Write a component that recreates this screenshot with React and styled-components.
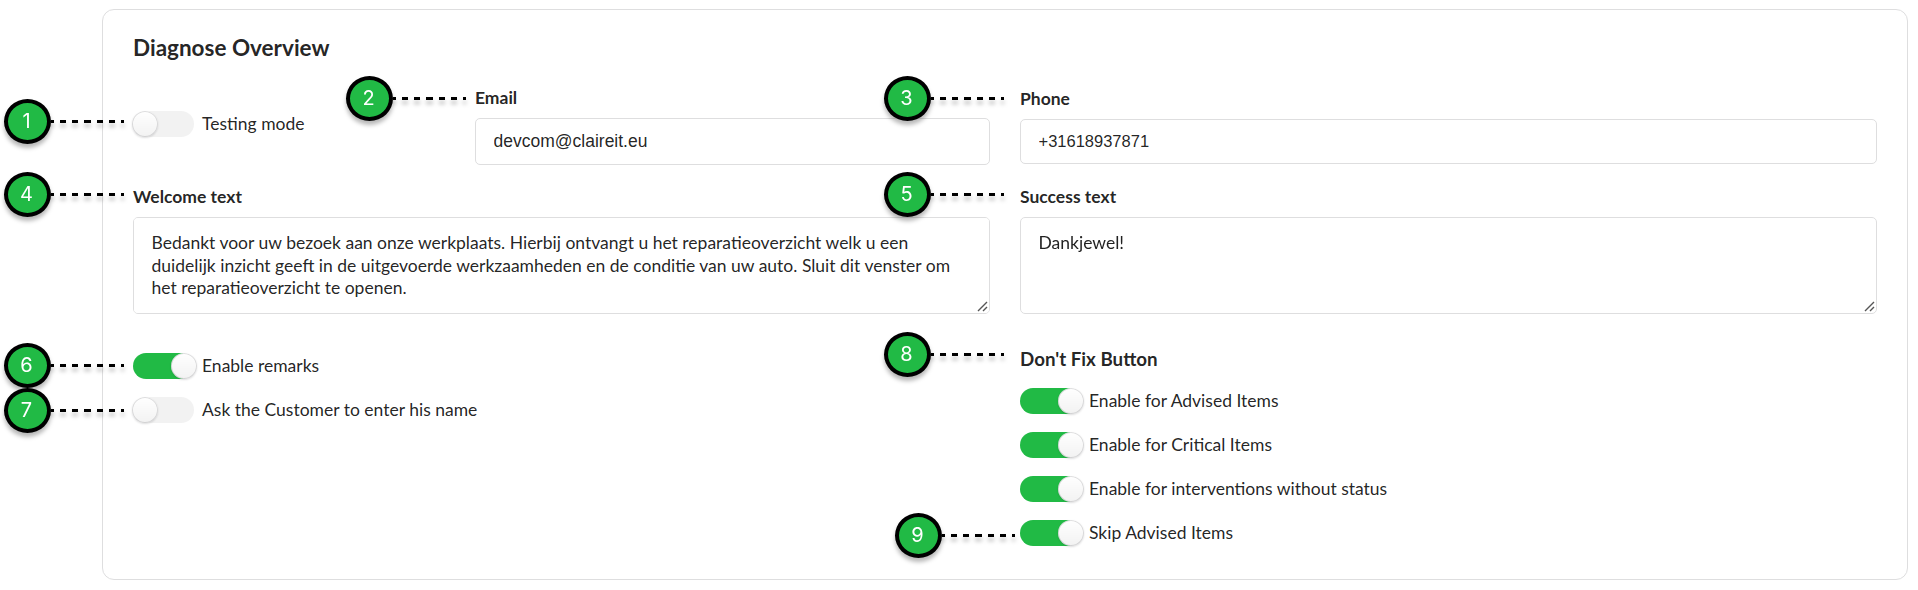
import styled, { createGlobalStyle } from "styled-components";

const GlobalStyle = createGlobalStyle`
  * {
    box-sizing: border-box;
  }

  body {
    margin: 0;
    background-color: #fff;
    color: rgba(0, 0, 0, 0.87);
    font-family: Lato, "Open Sans", sans-serif;
    font-size: 17.5px;
    line-height: 22.5px;
  }
`;

const Page = styled.main`
  position: relative;
  height: 590px;
  padding: 9px 10px 10px 102px;
  overflow: hidden;
`;

const Segment = styled.section`
  height: 571px;
  padding: 23px 30px 0;
  border: 1px solid #dededf;
  border-radius: 12px;
`;

const Title = styled.h3`
  margin: 0;
  font-size: 22.5px;
  line-height: 29px;
  font-weight: 700;
`;

const Columns = styled.div`
  display: grid;
  grid-template-columns: 1fr 1fr;
  column-gap: 30px;
`;

const ModeRow = styled.div`
  display: grid;
  grid-template-columns: 342px 1fr;
`;

const Field = styled.div`
  display: flex;
  flex-direction: column;
  padding-top: ${(props) => props.$top}px;
`;

const Label = styled.label`
  margin-bottom: 9px;
  font-size: 17.5px;
  line-height: 22px;
  font-weight: 700;
`;

const Input = styled.input`
  width: 100%;
  height: ${(props) => props.$height}px;
  padding: 0 17.5px;
  border: 1px solid #dededf;
  border-radius: 5px;
  outline: none;
  background: #fff;
  color: rgba(0, 0, 0, 0.87);
  font-family: "Liberation Sans", Arial, sans-serif;
  font-size: ${(props) => props.$size}px;
`;

const TextBox = styled.div`
  position: relative;
`;

const TextArea = styled.textarea`
  display: block;
  width: 100%;
  height: 97px;
  padding: 14px 17.5px;
  border: 1px solid #dededf;
  border-radius: 5px;
  outline: none;
  resize: none;
  overflow: auto;
  background: #fff;
  color: rgba(0, 0, 0, 0.87);
  font: inherit;
`;

const Grip = styled.svg`
  position: absolute;
  right: 2px;
  bottom: 2px;
  width: 11px;
  height: 11px;
  stroke: #555;
  stroke-width: 1.4;
`;

const ToggleList = styled.div`
  display: flex;
  flex-direction: column;
  gap: 18px;
  padding-top: ${(props) => props.$top}px;
`;

const ToggleRow = styled.label`
  display: flex;
  align-items: center;
  gap: ${(props) => (props.$on ? 5 : 8)}px;
  height: 26px;
`;

const Track = styled.span`
  display: flex;
  justify-content: ${(props) => (props.$on ? "flex-end" : "flex-start")};
  width: ${(props) => (props.$on ? 64 : 61)}px;
  height: 26px;
  border-radius: 13px;
  background: ${(props) =>
    props.$on
      ? "linear-gradient(to right, #21ba45 50px, transparent 50px)"
      : "#f2f2f2"};
`;

const Knob = styled.span`
  width: 26px;
  height: 26px;
  margin-left: -1px;
  border-radius: 50%;
  background: #fff linear-gradient(transparent, rgba(0, 0, 0, 0.05));
  box-shadow:
    0 1px 2px 0 rgba(34, 36, 38, 0.15),
    0 0 0 1px rgba(34, 36, 38, 0.15) inset;
`;

const GroupTitle = styled.h4`
  margin: 0;
  padding-top: 34px;
  font-size: 18.75px;
  line-height: 22px;
  font-weight: 700;
`;

// Numbered markers float above the form
const Callout = styled.div`
  position: absolute;
  left: ${(props) => props.$x}px;
  top: ${(props) => props.$y}px;
  display: flex;
  align-items: center;
  filter: drop-shadow(0 4px 2px rgba(0, 0, 0, 0.28));
`;

const Badge = styled.span`
  display: flex;
  align-items: center;
  justify-content: center;
  width: 47px;
  height: 45px;
  padding: 0 2px 1px 0;
  border: 4px solid #000;
  border-radius: 50%;
  background: #21ba45;
  color: #fff;
  font-family: Inter, sans-serif;
  font-size: 20px;
  font-weight: 400;
  line-height: 1;
`;

const Leader = styled.span`
  width: 73px;
  height: 3px;
  background: repeating-linear-gradient(
    to right,
    #000 0 3px,
    transparent 3px 9px,
    #000 9px 12.2px
  );
`;

const callouts = [
  { id: 1, x: 4, y: 99 },
  { id: 2, x: 346, y: 76 },
  { id: 3, x: 884, y: 76 },
  { id: 4, x: 4, y: 172 },
  { id: 5, x: 884, y: 172 },
  { id: 6, x: 4, y: 343 },
  { id: 7, x: 4, y: 388 },
  { id: 8, x: 884, y: 332 },
  { id: 9, x: 895, y: 513 },
];

const fixOptions = [
  "Enable for Advised Items",
  "Enable for Critical Items",
  "Enable for interventions without status",
  "Skip Advised Items",
];

const welcomeText =
  "Bedankt voor uw bezoek aan onze werkplaats. Hierbij ontvangt u het reparatieoverzicht welk u een duidelijk inzicht geeft in de uitgevoerde werkzaamheden en de conditie van uw auto. Sluit dit venster om het reparatieoverzicht te openen.";

const Toggle = ({ on, children }) => (
  <ToggleRow $on={on}>
    <Track $on={on}>
      <Knob />
    </Track>
    <span>{children}</span>
  </ToggleRow>
);

const MultilineInput = ({ value }) => (
  <TextBox>
    <TextArea defaultValue={value} />
    <Grip viewBox="0 0 11 11">
      <path d="M1 10 10 1M6 10 10 6" />
    </Grip>
  </TextBox>
);

export default function App() {
  return (
    <>
      <GlobalStyle />
      <Page>
        <Segment>
          <Title>Diagnose Overview</Title>
          <Columns>
            <div>
              <ModeRow>
                <ToggleList $top={49}>
                  <Toggle>Testing mode</Toggle>
                </ToggleList>
                <Field $top={25}>
                  <Label>Email</Label>
                  <Input
                    $height={47}
                    $size={17.5}
                    defaultValue="devcom@claireit.eu"
                  />
                </Field>
              </ModeRow>
              <Field $top={21}>
                <Label>Welcome text</Label>
                <MultilineInput value={welcomeText} />
              </Field>
              <ToggleList $top={39}>
                <Toggle on>Enable remarks</Toggle>
                <Toggle>Ask the Customer to enter his name</Toggle>
              </ToggleList>
            </div>
            <div>
              <Field $top={26}>
                <Label>Phone</Label>
                <Input $height={45} $size={16.5} defaultValue="+31618937871" />
              </Field>
              <Field $top={22}>
                <Label>Success text</Label>
                <MultilineInput value="Dankjewel!" />
              </Field>
              <GroupTitle>Don't Fix Button</GroupTitle>
              <ToggleList $top={18}>
                {fixOptions.map((option) => (
                  <Toggle key={option} on>
                    {option}
                  </Toggle>
                ))}
              </ToggleList>
            </div>
          </Columns>
        </Segment>
        {callouts.map(({ id, x, y }) => (
          <Callout key={id} $x={x} $y={y}>
            <Badge>{id}</Badge>
            <Leader />
          </Callout>
        ))}
      </Page>
    </>
  );
}
